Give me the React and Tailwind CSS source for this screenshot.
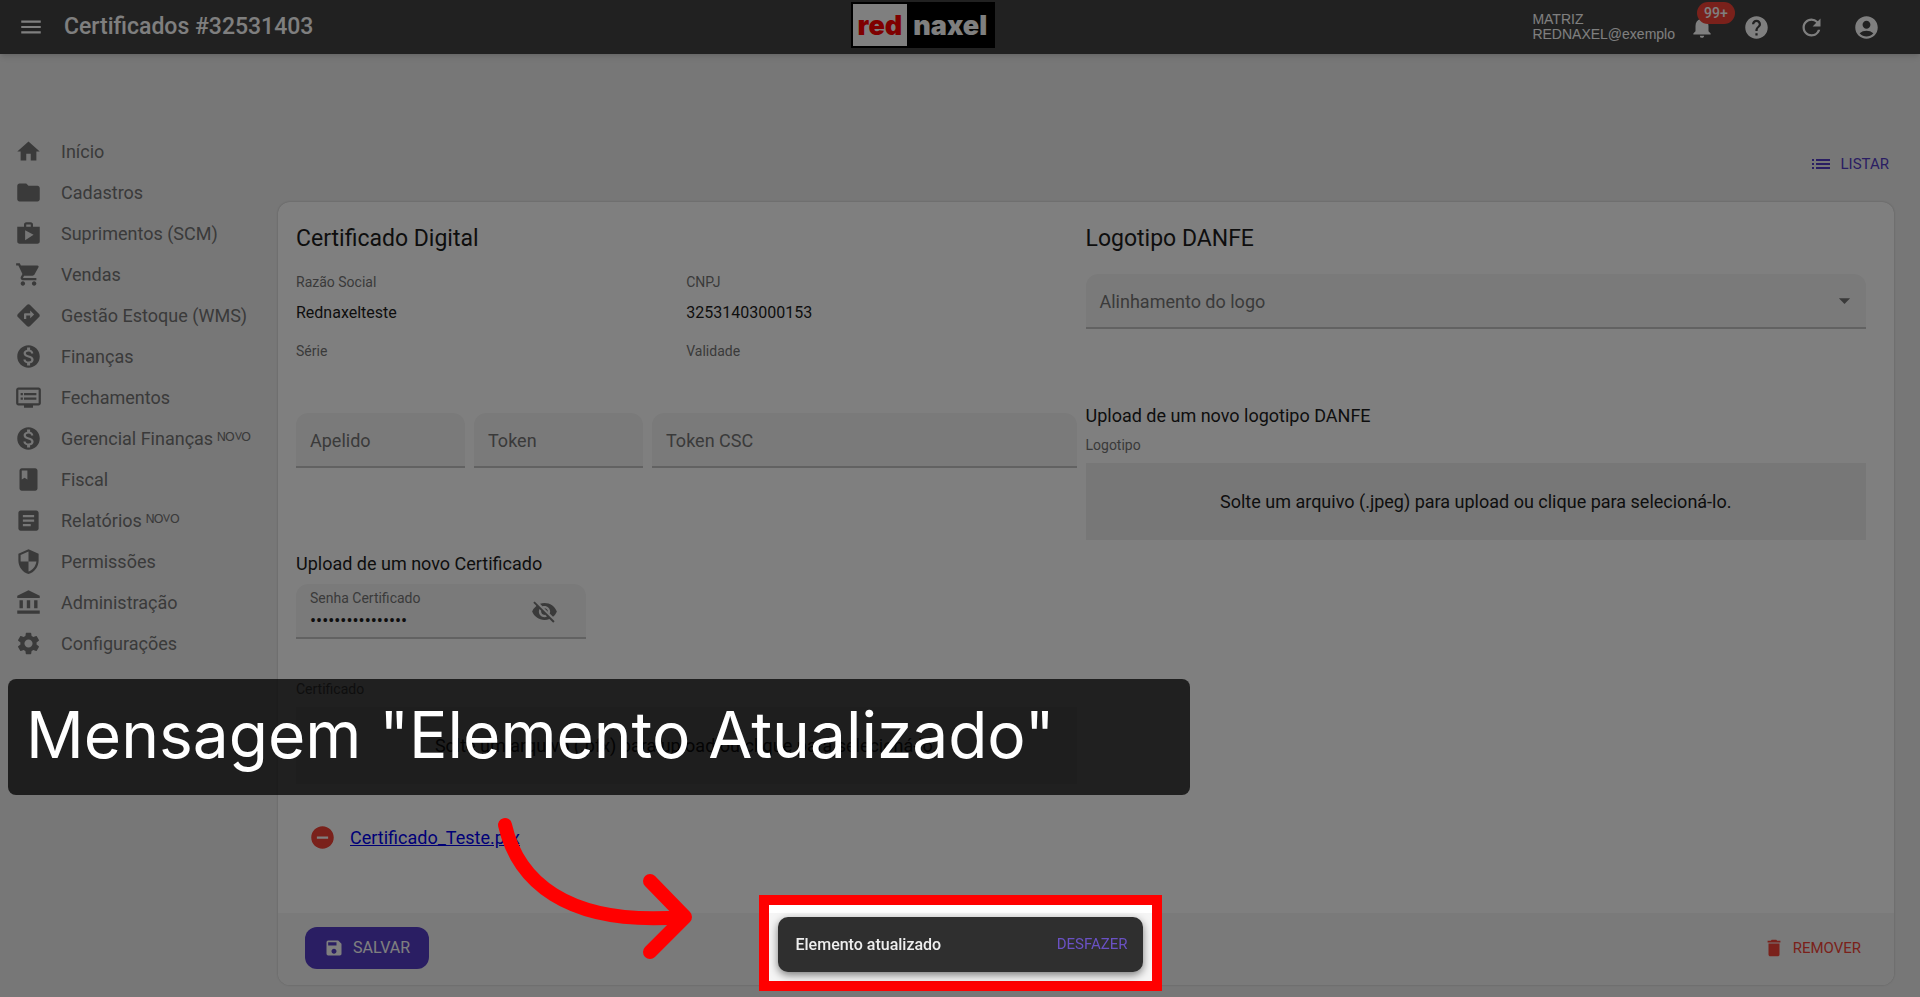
import React, { useState } from "react";
import {
  MdMenu,
  MdHome,
  MdFolder,
  MdShop,
  MdShoppingCart,
  MdDirections,
  MdMonetizationOn,
  MdDvr,
  MdBook,
  MdArticle,
  MdSecurity,
  MdAccountBalance,
  MdSettings,
  MdNotifications,
  MdHelp,
  MdRefresh,
  MdAccountCircle,
  MdList,
  MdArrowDropDown,
  MdVisibilityOff,
  MdVisibility,
  MdRemoveCircle,
  MdSave,
  MdDelete,
} from "react-icons/md";

const menuItems = [
  { label: "Início", icon: MdHome },
  { label: "Cadastros", icon: MdFolder },
  { label: "Suprimentos (SCM)", icon: MdShop },
  { label: "Vendas", icon: MdShoppingCart },
  { label: "Gestão Estoque (WMS)", icon: MdDirections },
  { label: "Finanças", icon: MdMonetizationOn },
  { label: "Fechamentos", icon: MdDvr },
  { label: "Gerencial Finanças ᴺᴼⱽᴼ", icon: MdMonetizationOn },
  { label: "Fiscal", icon: MdBook },
  { label: "Relatórios ᴺᴼⱽᴼ", icon: MdArticle },
  { label: "Permissões", icon: MdSecurity },
  { label: "Administração", icon: MdAccountBalance },
  { label: "Configurações", icon: MdSettings },
];

const Header = () => (
  <header className="flex items-center justify-between h-[54px] bg-[#424242] text-white shadow-md">
    <div className="flex items-center gap-5 pl-[18px]">
      <button aria-label="Menu">
        <MdMenu className="size-[26px]" />
      </button>
      <h1 className="text-[23px] leading-7 font-medium">Certificados #32531403</h1>
    </div>

    <div className="flex items-stretch h-[46px] mb-1 border-2 border-black bg-black font-['Inter',sans-serif] text-[27px] font-black">
      <span className="flex items-center bg-white px-[5px] pt-0.5 text-[#ff0000]">red</span>
      <span className="flex items-center px-[6px] pt-0.5">naxel</span>
    </div>

    <div className="flex items-center justify-end pr-10">
      <p className="mr-[14px] text-[14px] leading-[15px] font-['Liberation_Sans',sans-serif]">
        MATRIZ
        <br />
        REDNAXEL@exemplo
      </p>
      <div className="flex items-center gap-7">
        <button className="relative" aria-label="Notificações">
          <MdNotifications className="size-[26px]" />
          <span className="absolute -top-3 left-2 rounded-full bg-[#f44336] px-[7px] text-[14px] leading-[22px] font-medium">
            99+
          </span>
        </button>
        <button aria-label="Ajuda">
          <MdHelp className="size-[27px]" />
        </button>
        <button aria-label="Atualizar">
          <MdRefresh className="size-[27px]" />
        </button>
        <button aria-label="Conta">
          <MdAccountCircle className="size-[27px]" />
        </button>
      </div>
    </div>
  </header>
);

const Sidebar = () => (
  <nav className="w-[278px] shrink-0 pt-[77px] pl-[15px]">
    {menuItems.map(({ label, icon: Icon }) => (
      <a
        key={label}
        href="#"
        className="flex items-center gap-[19px] h-[41px] text-[18px] text-[#757575] whitespace-nowrap"
      >
        <Icon className="size-[27px] shrink-0" />
        {label}
      </a>
    ))}
  </nav>
);

const Info = ({ label, value }) => (
  <div className="flex-1">
    <dt className="text-[14px] leading-5 text-[#757575]">{label}</dt>
    <dd className="mt-[9px] h-10 text-[16px] leading-6 text-[#1c1c1c]">{value}</dd>
  </div>
);

const Field = ({ id, label, className }) => (
  <div className={`relative ${className}`}>
    <label htmlFor={id} className="absolute left-[14px] top-4 text-[18px] leading-6 text-[#757575]">
      {label}
    </label>
    <input
      id={id}
      className="w-full h-[55px] px-[14px] rounded-t-xl bg-[#f5f5f5] border-b-2 border-[#c4c4c4]"
    />
  </div>
);

const DropZone = ({ id, label, text }) => (
  <div>
    <label htmlFor={id} className="block text-[14px] leading-5 text-[#757575]">
      {label}
    </label>
    <label
      htmlFor={id}
      className="flex items-center justify-center h-[77px] mt-2 mb-px bg-[#eeeeee] text-[18px] text-[#1c1c1c] cursor-pointer"
    >
      {text}
    </label>
    <input id={id} type="file" className="sr-only" />
  </div>
);

const CertificateForm = () => {
  const [visible, setVisible] = useState(false);

  return (
    <section className="flex-1">
      <h2 className="text-[23px] leading-8">Certificado Digital</h2>
      <dl>
        <div className="flex mt-[17px]">
          <Info label="Razão Social" value="Rednaxelteste" />
          <Info label="CNPJ" value="32531403000153" />
        </div>
        <div className="flex">
          <Info label="Série" />
          <Info label="Validade" />
        </div>
      </dl>

      <div className="flex gap-[9px] mt-[3px]">
        <Field id="apelido" label="Apelido" className="w-[169px]" />
        <Field id="token" label="Token" className="w-[169px]" />
        <Field id="csc" label="Token CSC" className="flex-1" />
      </div>

      <h3 className="mt-[84px] text-[18px] leading-6">Upload de um novo Certificado</h3>
      <div className="relative w-[290px] mt-2">
        <label htmlFor="senha" className="absolute left-[14px] top-1 text-[14px] leading-5 text-[#757575]">
          Senha Certificado
        </label>
        <input
          id="senha"
          type={visible ? "text" : "password"}
          defaultValue="certificado12345"
          className="w-full h-[55px] pl-[14px] pr-16 pt-5 rounded-t-xl bg-[#f5f5f5] border-b-2 border-[#c4c4c4] text-[18px] text-[#1c1c1c]"
        />
        <button
          aria-label="Mostrar senha"
          onClick={() => setVisible(!visible)}
          className="absolute right-[28px] top-[14px] text-[#757575]"
        >
          {visible ? <MdVisibility className="size-[27px]" /> : <MdVisibilityOff className="size-[27px]" />}
        </button>
      </div>

      <div className="mt-10">
        <DropZone
          id="certificado"
          label="Certificado"
          text="Solte um arquivo (.pfx) para upload ou clique para selecioná-lo."
        />
      </div>

      <div className="flex items-center gap-[14px] mt-10 pl-[13px]">
        <button aria-label="Remover arquivo" className="text-[#f44336]">
          <MdRemoveCircle className="size-[27px]" />
        </button>
        <a href="#" className="text-[18px] leading-6 text-[#0000ee] underline">
          Certificado_Teste.pfx
        </a>
      </div>
    </section>
  );
};

const LogoForm = () => (
  <section className="flex-1">
    <h2 className="text-[23px] leading-8">Logotipo DANFE</h2>
    <div className="relative mt-[19px]">
      <label
        htmlFor="alinhamento"
        className="absolute left-[14px] top-4 text-[18px] leading-6 text-[#757575] pointer-events-none"
      >
        Alinhamento do logo
      </label>
      <select
        id="alinhamento"
        defaultValue=""
        className="appearance-none w-full h-[55px] rounded-t-xl bg-[#f5f5f5] border-b-2 border-[#c4c4c4]"
      >
        <option value=""></option>
      </select>
      <MdArrowDropDown className="absolute right-2 top-[13px] size-[27px] text-[#757575] pointer-events-none" />
    </div>
    <h3 className="mt-[75px] mb-[7px] text-[18px] leading-6">Upload de um novo logotipo DANFE</h3>
    <DropZone
      id="logotipo"
      label="Logotipo"
      text="Solte um arquivo (.jpeg) para upload ou clique para selecioná-lo."
    />
  </section>
);

const Snackbar = () => (
  <div className="fixed inset-x-0 bottom-[6px] flex justify-center">
    {/* the huge shadow dims everything around the highlighted message */}
    <div className="border-[10px] border-[#ff0000] px-[9px] pt-3 pb-[9px] shadow-[0_0_0_3000px_rgba(0,0,0,0.5)]">
      <div className="flex items-center justify-between w-[365px] h-[55px] pl-[18px] pr-[15px] rounded-[10px] bg-[#2f2f2f] shadow-[0_3px_8px_rgba(0,0,0,0.5)]">
        <span className="text-[16px] font-medium text-[#eeeeee]">Elemento atualizado</span>
        <button className="text-[15px] text-[#6a51c4]">DESFAZER</button>
      </div>
    </div>
  </div>
);

const Arrow = () => (
  <svg
    className="fixed left-[495px] bottom-[33px]"
    width="200"
    height="150"
    viewBox="495 814 200 150"
    fill="none"
    stroke="#ff0000"
    strokeWidth="14"
    strokeLinecap="round"
    strokeLinejoin="round"
  >
    <path d="M505 825C517 878 563 927 684 917" />
    <path d="M650 881L685 917L650 952" />
  </svg>
);

const App = () => {
  return (
    <div className="flex flex-col min-h-screen bg-[#eeeeee] text-[#1c1c1c] font-['Roboto',sans-serif]">
      <Header />
      <div className="flex flex-1">
        <Sidebar />
        <main className="flex flex-1 flex-col pr-[26px] pb-3">
          <div className="flex justify-end pt-[98px] pr-[5px] mb-[26px]">
            <button className="flex items-center gap-2 text-[15px] leading-6 text-[#543cc6]">
              <MdList className="size-6" />
              LISTAR
            </button>
          </div>

          <div className="flex flex-1 flex-col rounded-xl bg-white shadow-[0_0_2px_rgba(0,0,0,0.25)] overflow-hidden">
            <div className="flex flex-1 gap-[9px] pt-[21px] pl-[18px] pr-7">
              <CertificateForm />
              <LogoForm />
            </div>
            <div className="flex items-center justify-between h-[72px] pl-[27px] pr-[33px] pb-0.5 bg-[#f5f5f5]">
              <button className="flex items-center gap-[9px] h-[42px] px-[19px] rounded-xl bg-[#543cc6] text-[16px] text-white">
                <MdSave className="size-5" />
                SALVAR
              </button>
              <button className="flex items-center gap-2 text-[15px] text-[#f44336]">
                <MdDelete className="size-[22px]" />
                REMOVER
              </button>
            </div>
          </div>
        </main>
      </div>

      <Snackbar />
      <p className="fixed left-2 bottom-[202px] w-[1182px] h-[116px] rounded-lg bg-black/75 pl-[18px] text-[64px] leading-[112px] text-white whitespace-nowrap font-['Inter',sans-serif]">
        Mensagem "Elemento Atualizado"
      </p>
      <Arrow />
    </div>
  );
};

export default App;
